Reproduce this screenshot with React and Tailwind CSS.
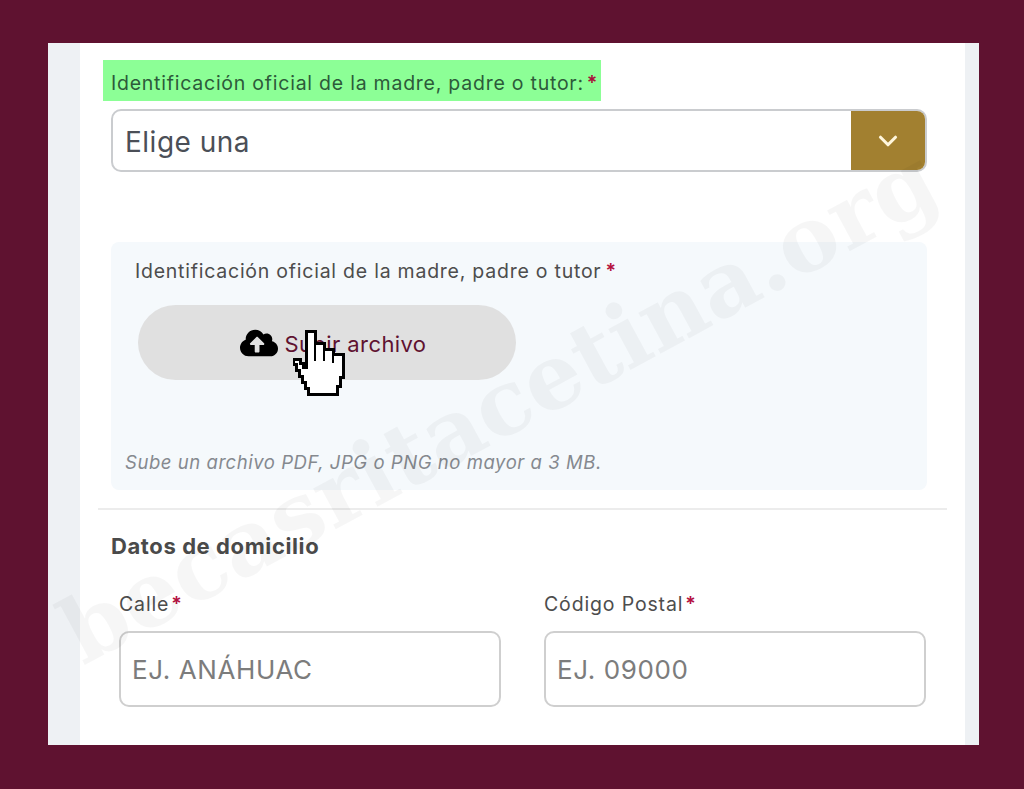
import React from 'react';
import { ChevronDown } from 'lucide-react';
import { FaCloudUploadAlt } from 'react-icons/fa';

function Star() {
  return <span className="ml-[2px] text-[#b5123f] font-semibold">*</span>;
}

function Field({ label, placeholder }) {
  return (
    <div className="w-[382px]">
      <p className="h-[27px] text-[19.5px] leading-[27px] text-[#4d4d4d] tracking-[0.85px]">
        {label}
        <Star />
      </p>
      <div className="mt-[13px] h-[76px] flex items-center pl-[11px] pt-[1px] rounded-[10px] border-2 border-[#cfcfcf] text-[26px] text-[#7c7c7c] tracking-[0.6px]">
        {placeholder}
      </div>
    </div>
  );
}

function HandCursor() {
  return (
    <svg width="52" height="66" viewBox="0 0 52 66" className="absolute left-[155px] top-[25px]" shapeRendering="crispEdges">
      <path
        d="M13 1H22V13H31V19H40V24H50V47H47V56H44V64H15V58H12V52H9V46H6V40H3V34H0V29H7V33H10V37H13Z"
        fill="#fff"
        stroke="#000"
        strokeWidth="3"
      />
      <path d="M22 13V31M31 19V31M40 24V33" fill="none" stroke="#000" strokeWidth="2.5" />
    </svg>
  );
}

function App() {
  return (
    <div className="w-[1024px] h-[789px] bg-[#5f1230] pt-[43px] pl-[48px] font-['Inter','Liberation_Sans',sans-serif]">
      <div className="relative w-[931px] h-[702px] flex bg-white overflow-hidden">
        <div className="w-[32px] bg-[#eef1f4]"></div>
        <main className="flex-1 pl-[23px] pt-[17px]">
          <div className="w-[498px] h-[41px] bg-[#8cff96] pl-[8px] text-[19.5px] leading-[46px] text-[#2d5a3a] tracking-[0.76px] whitespace-nowrap">
            Identificación oficial de la madre, padre o tutor:<span className="ml-[3px] text-[#a8123a] font-semibold">*</span>
          </div>

          <div className="ml-[8px] mt-[8px] w-[816px] h-[63px] flex rounded-[10px] border-2 border-[#cacccf] overflow-hidden">
            <div className="flex-1 flex items-center pl-[12px] pt-[2px] text-[28px] text-[#4b4f57] tracking-[0.5px]">Elige una</div>
            <div className="w-[76px] bg-[#a28030] flex items-center justify-center -my-[2px] -mr-[2px]">
              <ChevronDown size={30} strokeWidth={2.5} className="text-[#fff6dc] -ml-[2px]" />
            </div>
          </div>

          <section className="ml-[8px] mt-[70px] w-[816px] h-[248px] bg-[#f5f9fc] rounded-[8px] relative">
            <p className="pl-[24px] pt-[16px] text-[19.5px] leading-[27px] text-[#4d4d4d] tracking-[0.76px] whitespace-nowrap">
              Identificación oficial de la madre, padre o tutor
              <span className="ml-[4px] text-[#b5123f] font-semibold">*</span>
            </p>
            <div className="relative ml-[27px] mt-[20px] w-[378px] h-[75px] rounded-full bg-[#e0e0e0] flex items-center justify-center gap-[7px] text-[22px] text-[#5f1230] tracking-[0.4px] pl-[12px]">
              <FaCloudUploadAlt size={38} className="text-black" />
              <span className="mt-[3px]">Subir archivo</span>
              <HandCursor />
            </div>
            <p className="pl-[14px] mt-[69px] text-[18.5px] leading-[26px] italic text-[#85898f] tracking-[0.55px] whitespace-nowrap">
              Sube un archivo PDF, JPG o PNG no mayor a 3 MB.
            </p>
          </section>

          <hr className="-ml-[5px] mt-[18px] w-[849px] border-0 h-[2px] bg-[#ececec]" />

          <h3 className="ml-[8px] mt-[23px] h-[27px] text-[22px] leading-[27px] font-bold text-[#4a4a4a] tracking-[0.6px] whitespace-nowrap">Datos de domicilio</h3>

          <div className="ml-[16px] mt-[31px] flex gap-[43px]">
            <Field label="Calle" placeholder="EJ. ANÁHUAC" />
            <Field label="Código Postal" placeholder="EJ. 09000" />
          </div>
        </main>
        <div className="w-[14px] bg-[#eef1f4]"></div>

        {/* watermark sits over the whole form */}
        <div className="absolute left-[450px] top-[362px] w-0 h-0 flex items-center justify-center pointer-events-none">
          <span className="shrink-0 -rotate-[28.4deg] whitespace-nowrap font-['DejaVu_Serif',serif] font-bold text-[90px] leading-none text-black/[0.035]">
            becasritacetina.org
          </span>
        </div>
      </div>
    </div>
  );
}

export default App;
